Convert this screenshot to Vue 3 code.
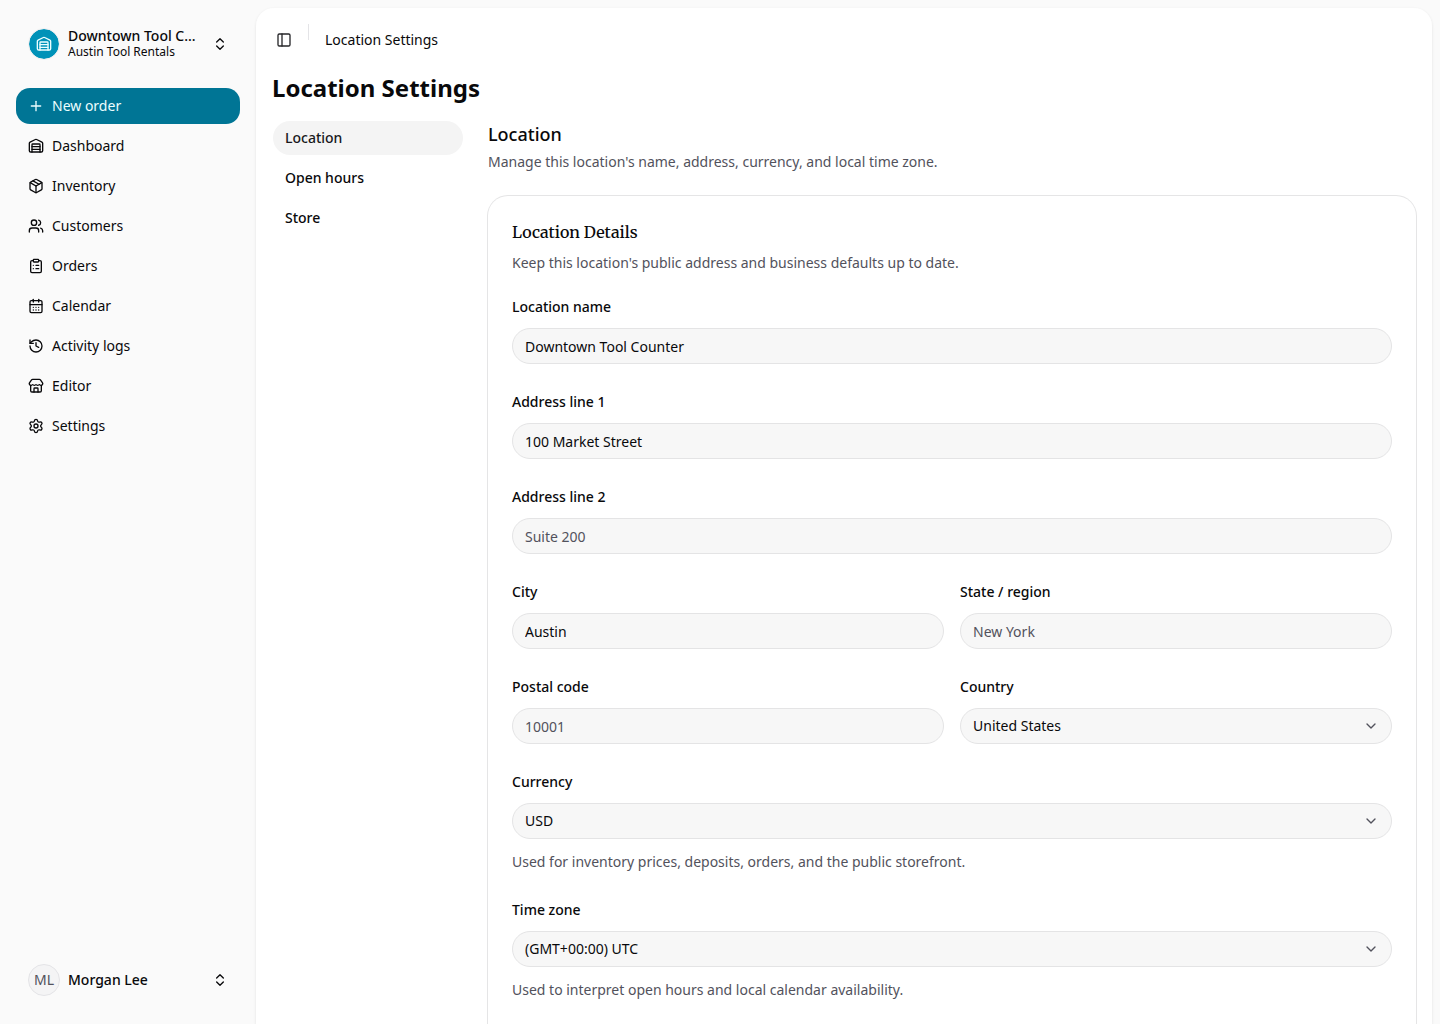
<template>
  <div class="layout">
    <aside class="sidebar">
      <button type="button" class="switcher">
        <span class="store-avatar">
          <svg class="icon" viewBox="0 0 24 24" v-html="icons.warehouse"></svg>
        </span>
        <span class="switcher-text">
          <span class="switcher-name">Downtown Tool C...</span>
          <span class="switcher-org">Austin Tool Rentals</span>
        </span>
        <svg class="icon" viewBox="0 0 24 24" v-html="icons.chevrons"></svg>
      </button>

      <nav class="menu">
        <a
          v-for="item in menu"
          :key="item.label"
          href="#"
          class="menu-item"
          :class="{ primary: item.primary }"
        >
          <svg class="icon" viewBox="0 0 24 24" v-html="icons[item.icon]"></svg>
          <span>{{ item.label }}</span>
        </a>
      </nav>

      <button type="button" class="switcher">
        <span class="user-avatar">ML</span>
        <span class="switcher-text">
          <span class="switcher-name">Morgan Lee</span>
        </span>
        <svg class="icon" viewBox="0 0 24 24" v-html="icons.chevrons"></svg>
      </button>
    </aside>

    <main class="panel">
      <header class="topbar">
        <button type="button" class="toggle" aria-label="Toggle sidebar">
          <svg class="icon" viewBox="0 0 24 24" v-html="icons.panel"></svg>
        </button>
        <span class="separator"></span>
        <span class="crumb">Location Settings</span>
      </header>

      <h1>Location Settings</h1>

      <div class="content">
        <nav class="tabs">
          <button
            v-for="tab in tabs"
            :key="tab"
            type="button"
            class="tab"
            :class="{ active: tab === activeTab }"
            @click="activeTab = tab"
          >
            {{ tab }}
          </button>
        </nav>

        <section class="section">
          <h2>Location</h2>
          <p class="section-text">Manage this location's name, address, currency, and local time zone.</p>

          <form class="card" @submit.prevent>
            <h3>Location Details</h3>
            <p class="card-text">Keep this location's public address and business defaults up to date.</p>

            <div class="fields">
              <div
                v-for="field in fields"
                :key="field.id"
                class="field"
                :class="{ half: field.half }"
              >
                <label :for="field.id">{{ field.label }}</label>
                <div v-if="field.options" class="select">
                  <select :id="field.id" v-model="form[field.id]">
                    <option v-for="option in field.options" :key="option">{{ option }}</option>
                  </select>
                  <svg class="icon" viewBox="0 0 24 24" v-html="icons.down"></svg>
                </div>
                <input
                  v-else
                  :id="field.id"
                  v-model="form[field.id]"
                  type="text"
                  :placeholder="field.placeholder"
                />
                <p v-if="field.hint" class="hint">{{ field.hint }}</p>
              </div>
            </div>
          </form>
        </section>
      </div>
    </main>
  </div>
</template>

<script setup>
import { reactive, ref } from 'vue';

const icons = {
  warehouse:
    '<path d="M18 21V10a1 1 0 0 0-1-1H7a1 1 0 0 0-1 1v11"/><path d="M22 19a2 2 0 0 1-2 2H4a2 2 0 0 1-2-2V8a2 2 0 0 1 1.132-1.803l7.95-3.974a2 2 0 0 1 1.837 0l7.948 3.974A2 2 0 0 1 22 8z"/><path d="M6 13h12"/><path d="M6 17h12"/>',
  chevrons: '<path d="m7 15 5 5 5-5"/><path d="m7 9 5-5 5 5"/>',
  plus: '<path d="M5 12h14"/><path d="M12 5v14"/>',
  box:
    '<path d="M11 21.73a2 2 0 0 0 2 0l7-4A2 2 0 0 0 21 16V8a2 2 0 0 0-1-1.73l-7-4a2 2 0 0 0-2 0l-7 4A2 2 0 0 0 3 8v8a2 2 0 0 0 1 1.73z"/><path d="M12 22V12"/><path d="M3.29 7 12 12l8.71-5"/><path d="m7.5 4.27 9 5.15"/>',
  users:
    '<path d="M16 21v-2a4 4 0 0 0-4-4H6a4 4 0 0 0-4 4v2"/><path d="M16 3.128a4 4 0 0 1 0 7.744"/><path d="M22 21v-2a4 4 0 0 0-3-3.87"/><circle cx="9" cy="7" r="4"/>',
  clipboard:
    '<rect width="8" height="4" x="8" y="2" rx="1" ry="1"/><path d="M16 4h2a2 2 0 0 1 2 2v14a2 2 0 0 1-2 2H6a2 2 0 0 1-2-2V6a2 2 0 0 1 2-2h2"/><path d="M12 11h4"/><path d="M12 16h4"/><path d="M8 11h.01"/><path d="M8 16h.01"/>',
  calendar:
    '<path d="M8 2v4"/><path d="M16 2v4"/><rect width="18" height="18" x="3" y="4" rx="2"/><path d="M3 10h18"/><path d="M8 14h.01"/><path d="M12 14h.01"/><path d="M16 14h.01"/><path d="M8 18h.01"/><path d="M12 18h.01"/><path d="M16 18h.01"/>',
  history:
    '<path d="M3 12a9 9 0 1 0 9-9 9.75 9.75 0 0 0-6.74 2.74L3 8"/><path d="M3 3v5h5"/><path d="M12 7v5l4 2"/>',
  store:
    '<path d="M15 21v-5a1 1 0 0 0-1-1h-4a1 1 0 0 0-1 1v5"/><path d="M17.774 10.31a1.12 1.12 0 0 0-1.549 0 2.5 2.5 0 0 1-3.451 0 1.12 1.12 0 0 0-1.548 0 2.5 2.5 0 0 1-3.452 0 1.12 1.12 0 0 0-1.549 0 2.5 2.5 0 0 1-3.77-3.248l2.889-4.184A2 2 0 0 1 7 2h10a2 2 0 0 1 1.653.873l2.895 4.192a2.5 2.5 0 0 1-3.774 3.244"/><path d="M4 10.95V19a2 2 0 0 0 2 2h12a2 2 0 0 0 2-2v-8.05"/>',
  settings:
    '<path d="M9.671 4.136a2.34 2.34 0 0 1 4.659 0 2.34 2.34 0 0 0 3.319 1.915 2.34 2.34 0 0 1 2.33 4.033 2.34 2.34 0 0 0 0 3.831 2.34 2.34 0 0 1-2.33 4.033 2.34 2.34 0 0 0-3.319 1.915 2.34 2.34 0 0 1-4.659 0 2.34 2.34 0 0 0-3.32-1.915 2.34 2.34 0 0 1-2.33-4.033 2.34 2.34 0 0 0 0-3.831A2.34 2.34 0 0 1 6.35 6.051a2.34 2.34 0 0 0 3.319-1.915"/><circle cx="12" cy="12" r="3"/>',
  panel: '<rect width="18" height="18" x="3" y="3" rx="2"/><path d="M9 3v18"/>',
  down: '<path d="m6 9 6 6 6-6"/>',
};

const menu = [
  { label: 'New order', icon: 'plus', primary: true },
  { label: 'Dashboard', icon: 'warehouse' },
  { label: 'Inventory', icon: 'box' },
  { label: 'Customers', icon: 'users' },
  { label: 'Orders', icon: 'clipboard' },
  { label: 'Calendar', icon: 'calendar' },
  { label: 'Activity logs', icon: 'history' },
  { label: 'Editor', icon: 'store' },
  { label: 'Settings', icon: 'settings' },
];

const tabs = ['Location', 'Open hours', 'Store'];
const activeTab = ref('Location');

const fields = [
  { id: 'name', label: 'Location name' },
  { id: 'address1', label: 'Address line 1' },
  { id: 'address2', label: 'Address line 2', placeholder: 'Suite 200' },
  { id: 'city', label: 'City', half: true },
  { id: 'state', label: 'State / region', placeholder: 'New York', half: true },
  { id: 'postal', label: 'Postal code', placeholder: '10001', half: true },
  { id: 'country', label: 'Country', options: ['United States'], half: true },
  {
    id: 'currency',
    label: 'Currency',
    options: ['USD'],
    hint: 'Used for inventory prices, deposits, orders, and the public storefront.',
  },
  {
    id: 'timezone',
    label: 'Time zone',
    options: ['(GMT+00:00) UTC'],
    hint: 'Used to interpret open hours and local calendar availability.',
  },
];

const form = reactive({
  name: 'Downtown Tool Counter',
  address1: '100 Market Street',
  address2: '',
  city: 'Austin',
  state: '',
  postal: '',
  country: 'United States',
  currency: 'USD',
  timezone: '(GMT+00:00) UTC',
});
</script>

<style>
body {
  margin: 0;
  background: #fafafa;
}
</style>

<style scoped>
.layout {
  display: flex;
  height: 100vh;
  overflow: hidden;
  font-family: "Noto Sans", sans-serif;
  font-size: 14px;
  line-height: 20px;
  color: #09090b;
}
h1,
h2,
h3,
p {
  margin: 0;
}
button,
input,
select {
  font: inherit;
  color: inherit;
}
button {
  border: none;
  background: none;
  cursor: pointer;
}
.icon {
  width: 16px;
  height: 16px;
  flex-shrink: 0;
  fill: none;
  stroke: currentColor;
  stroke-width: 2;
  stroke-linecap: round;
  stroke-linejoin: round;
}

.sidebar {
  display: flex;
  flex-direction: column;
  gap: 16px;
  width: 256px;
  flex-shrink: 0;
  box-sizing: border-box;
  padding: 16px;
}
.switcher {
  display: flex;
  align-items: center;
  gap: 8px;
  padding: 12px;
  text-align: left;
}
.store-avatar,
.user-avatar {
  display: flex;
  align-items: center;
  justify-content: center;
  width: 32px;
  height: 32px;
  flex-shrink: 0;
  box-sizing: border-box;
  border-radius: 50%;
}
.store-avatar {
  border: 1px solid #f0f0f1;
  background: #0092b8;
  background-clip: padding-box;
  color: #ecfeff;
}
.user-avatar {
  border: 1px solid #e4e4e7;
  background: #f4f4f5;
  color: #52525c;
}
.switcher-text {
  display: flex;
  flex-direction: column;
  flex: 1;
  min-width: 0;
}
.switcher-name {
  font-weight: 500;
  line-height: 16px;
  white-space: nowrap;
}
.switcher-org {
  font-size: 12px;
  line-height: 16px;
}
.menu {
  display: flex;
  flex-direction: column;
  flex: 1;
  gap: 4px;
}
.menu-item {
  display: flex;
  align-items: center;
  gap: 8px;
  height: 36px;
  padding: 0 12px;
  border-radius: 14px;
  color: inherit;
  text-decoration: none;
}
.menu-item.primary {
  background: #007595;
  color: #ecfeff;
}

.panel {
  flex: 1;
  min-width: 0;
  margin: 8px 8px 0 0;
  padding: 0 16px 16px;
  overflow-y: auto;
  scrollbar-width: none;
  border-radius: 18px 18px 0 0;
  background: #fff;
  box-shadow: 0 1px 3px rgba(0, 0, 0, 0.1);
}
.topbar {
  display: flex;
  align-items: center;
  height: 64px;
}
.toggle {
  display: flex;
  padding: 4px;
}
.toggle .icon {
  color: #27272a;
}
.separator {
  align-self: flex-start;
  width: 1px;
  height: 16px;
  margin: 16px 16px 0 12px;
  background: #e4e4e7;
}
h1 {
  font-size: 24px;
  font-weight: 700;
  line-height: 32px;
}
.content {
  display: flex;
  gap: 24px;
  margin-top: 16px;
}
.tabs {
  display: flex;
  flex-direction: column;
  gap: 4px;
  width: 192px;
  flex-shrink: 0;
}
.tab {
  height: 36px;
  padding: 0 12px;
  border: 1px solid transparent;
  border-radius: 18px;
  background-clip: padding-box;
  font-weight: 500;
  text-align: left;
}
.tab.active {
  background-color: #f4f4f4;
  color: #18181b;
}
.section {
  flex: 1;
  min-width: 0;
}
h2 {
  font-size: 18px;
  font-weight: 500;
  line-height: 28px;
}
.section-text {
  margin: 4px 0 24px;
  color: #52525c;
}
.card {
  padding: 24px 24px 48px;
  border-radius: 20px;
  box-shadow: 0 0 0 1px #e5e5e6;
}
h3 {
  font-family: Merriweather, "Liberation Serif", serif;
  font-size: 16px;
  font-weight: 500;
  line-height: 24px;
}
.card-text {
  margin: 8px 0 24px;
  line-height: 21px;
  color: #52525c;
}
.fields {
  display: grid;
  grid-template-columns: 1fr 1fr;
  gap: 28px 16px;
}
.field {
  display: flex;
  flex-direction: column;
  grid-column: span 2;
  gap: 12px;
  min-width: 0;
}
.field.half {
  grid-column: span 1;
}
label {
  font-weight: 500;
  line-height: 19px;
}
input,
select {
  width: 100%;
  height: 36px;
  box-sizing: border-box;
  padding: 0 12px;
  border: 1px solid #e4e4e5;
  border-radius: 18px;
  background: #f7f7f7;
}
input::placeholder {
  color: #52525c;
  opacity: 1;
}
.select {
  position: relative;
}
select {
  display: block;
  appearance: none;
}
.select .icon {
  position: absolute;
  top: 10px;
  right: 13px;
  color: #52525c;
  pointer-events: none;
}
.hint {
  line-height: 21px;
  color: #52525c;
}
</style>
